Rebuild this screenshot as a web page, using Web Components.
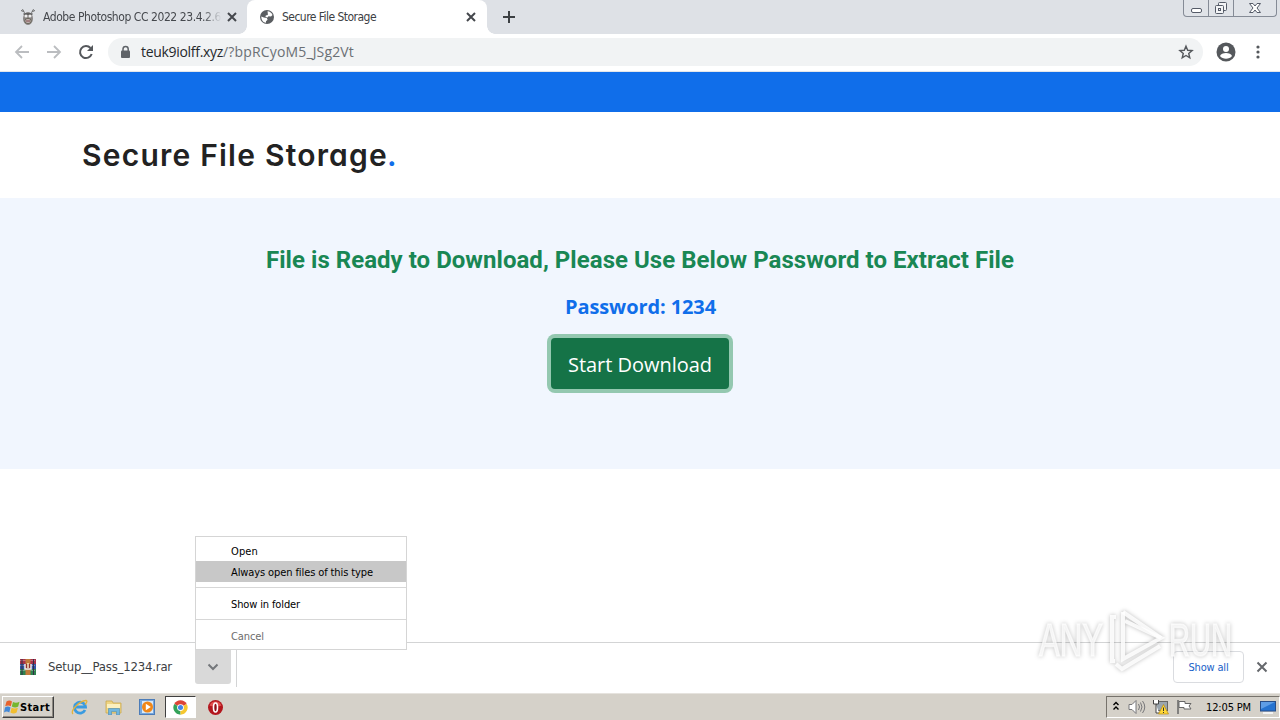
<!DOCTYPE html>
<html lang="en">
<head>
<meta charset="utf-8">
<title>Secure File Storage</title>
<style>
    body {
        margin: 0;
        width: 1280px;
        height: 720px;
        overflow: hidden;
        background: #fff;
        font-family: "DejaVu Sans Condensed", "DejaVu Sans", sans-serif;
    }
</style>
</head>
<body>
<desktop-screen></desktop-screen>

<script>
// one line of text, spaced out to the width given in px
class FitText extends HTMLElement {
    constructor() {
        super();
        this.attachShadow({ mode: 'open' });
        this.shadowRoot.innerHTML = `
            <style>
                :host { display: inline-block; white-space: nowrap; flex: none; }
                span { display: inline-block; }
            </style>
            <span><slot></slot></span>
        `;
    }

    connectedCallback() {
        const span = this.shadowRoot.querySelector('span');
        const width = Number(this.getAttribute('width'));
        const count = this.textContent.length;
        const natural = span.getBoundingClientRect().width;
        span.style.letterSpacing = (width - natural) / count + 'px';
        this.style.width = width + 'px';
    }
}

class BrowserTab extends HTMLElement {
    constructor() {
        super();
        this.attachShadow({ mode: 'open' });
        this.shadowRoot.innerHTML = `
            <style>
                :host {
                    display: flex;
                    align-items: center;
                    box-sizing: border-box;
                    width: 240px;
                    height: 34px;
                    padding: 0 9px 0 12px;
                    font-size: 12px;
                    color: #45484d;
                }
                :host([active]) {
                    background: #fff;
                    border-radius: 8px 8px 0 0;
                    color: #3c4043;
                }
                .icon { display: flex; width: 16px; margin-right: 7px; }
                .title { flex: 1; display: flex; overflow: hidden; }
                :host([faded]) .title {
                    -webkit-mask: linear-gradient(90deg, #000 88%, transparent 98%);
                }
            </style>
            <div class="icon"><slot name="icon"></slot></div>
            <div class="title"><slot></slot></div>
            <svg width="14" height="14" viewBox="0 0 14 14"><path d="M3 3l8 8M11 3l-8 8" stroke="#44474c" stroke-width="2"/></svg>
        `;
    }
}

class TabStrip extends HTMLElement {
    constructor() {
        super();
        this.attachShadow({ mode: 'open' });
        this.shadowRoot.innerHTML = `
            <style>
                :host { display: flex; height: 34px; background: #dee1e6; }
                .first { width: 239px; padding: 0 0 0 20px; }
                .plus { margin: 9px 0 0 7px; }
                .foot { align-self: flex-end; width: 8px; height: 8px; }
                .foot.left { background: radial-gradient(circle at 0 0, #dee1e6 7.5px, #fff 8px); }
                .foot.right { background: radial-gradient(circle at 100% 0, #dee1e6 7.5px, #fff 8px); }
                .window {
                    display: flex;
                    box-sizing: border-box;
                    height: 17px;
                    width: 94px;
                    margin-left: auto;
                    margin-right: 3px;
                    border: 1px solid #858b96;
                    border-top: 0;
                    border-radius: 0 0 4px 4px;
                    background: #e0e3e8;
                }
                .window svg { display: block; }
                .window div { border-right: 1px solid #858b96; width: 25px; box-sizing: border-box; }
                .window div:last-child { border: 0; width: 42px; }
            </style>
            <browser-tab class="first" faded>
                <svg slot="icon" width="16" height="18" viewBox="0 0 16 18">
                    <path d="M2.500 1.200l2 3.600M13.500 1.200l-2 3.600M1 2.500l2.500 1M15 2.500l-2.500 1" stroke="#666" fill="none"/>
                    <ellipse cx="8" cy="10.500" rx="5" ry="6.500" fill="#888484"/>
                    <path d="M3.500 6h9" stroke="#555" stroke-width="1.500"/>
                    <circle cx="6" cy="8" r="1.500" fill="#eee"/><circle cx="10" cy="8" r="1.500" fill="#eee"/>
                    <ellipse cx="8" cy="13" rx="3.200" ry="2.500" fill="#c9b9bb" stroke="#554" stroke-width=".8"/>
                    <path d="M6 13h4" stroke="#744"/>
                </svg>
                <fit-text width="178">Adobe Photoshop CC 2022 23.4.2.6</fit-text>
            </browser-tab>
            <div class="foot left"></div>
            <browser-tab active>
                <svg slot="icon" width="16" height="16" viewBox="0 0 16 16">
                    <circle cx="8" cy="8" r="7" fill="#5a5d61"/>
                    <path d="M8.500 2.300c2.400.2 4.300 1.600 5 3.700l-1.500 1.500-2.500-.3-1 1.300-2-.5.300-1.500 2-.500V4.500zM2.300 7.500l2.500 1 3 .500.800 1.700-1.600 1.600v1.500C4.300 13.600 2.200 11 2.300 7.500z" fill="#fff"/>
                </svg>
                <fit-text width="94">Secure File Storage</fit-text>
            </browser-tab>
            <div class="foot right"></div>
            <svg class="plus" width="14" height="16" viewBox="0 0 14 16"><path d="M7 2v12M1 8h12" stroke="#3c4043" stroke-width="2"/></svg>
            <div class="window">
                <div><svg width="24" height="16"><rect x="7.500" y="8.500" width="10" height="4" rx="1.500" fill="#fff" stroke="#555b68"/></svg></div>
                <div><svg width="24" height="16"><g fill="#f3f4f6" stroke="#555b68"><rect x="9.500" y="2.500" width="8" height="8" rx="1"/><rect x="6.500" y="5.500" width="8" height="8" rx="1"/><rect x="9.500" y="8.500" width="2" height="2"/></g></svg></div>
                <div><svg width="42" height="16"><path d="M15.500 3.500h3.500l2 2.500 2-2.500h3.500l-3.500 4.500 3.500 4.500H23l-2-2.500-2 2.500h-3.500L19 8z" fill="#fff" stroke="#555b68"/></svg></div>
            </div>
        `;
    }
}

class BrowserToolbar extends HTMLElement {
    constructor() {
        super();
        this.attachShadow({ mode: 'open' });
        this.shadowRoot.innerHTML = `
            <style>
                :host {
                    display: flex;
                    align-items: center;
                    box-sizing: border-box;
                    height: 38px;
                    padding: 0 14px 2px;
                    background: #fff;
                    border-bottom: 1px solid #e3e6ea;
                }
                .nav { display: flex; gap: 16px; }
                .omnibox {
                    display: flex;
                    align-items: center;
                    box-sizing: border-box;
                    width: 1095px;
                    height: 28px;
                    margin-left: 14px;
                    padding: 0 9px 0 11px;
                    border-radius: 14px;
                    background: #f1f3f4;
                    font-family: "Open Sans", "Noto Sans", sans-serif;
                    font-size: 14px;
                    color: #25282c;
                }
                .omnibox .path { color: #6b7075; }
                .lock { margin-right: 9px; }
                .star { margin-left: auto; }
                .user { margin-left: 13px; }
                .dots { margin-left: 14px; }
            </style>
            <div class="nav">
                <svg width="16" height="16" viewBox="0 0 16 16"><path d="M15 8H2M8 2L2 8l6 6" fill="none" stroke="#bbbdc0" stroke-width="1.800"/></svg>
                <svg width="16" height="16" viewBox="0 0 16 16"><path d="M1 8h13M8 2l6 6-6 6" fill="none" stroke="#bbbdc0" stroke-width="1.800"/></svg>
                <svg width="16" height="16" viewBox="0 0 16 16"><path d="M13.700 10A6 6 0 1 1 12.500 4" fill="none" stroke="#55585c" stroke-width="2"/><path d="M15 1v6H9z" fill="#55585c"/></svg>
            </div>
            <div class="omnibox">
                <svg class="lock" width="13" height="14" viewBox="0 0 13 14"><path d="M4 6V4a2.600 2.600 0 0 1 5.200 0v2" fill="none" stroke="#5f6368" stroke-width="1.500"/><rect x="2" y="5.500" width="9" height="7.500" rx="1" fill="#5f6368"/></svg>
                <fit-text width="82">teuk9iolff.xyz</fit-text><fit-text class="path" width="131">/?bpRCyoM5_JSg2Vt</fit-text>
                <svg class="star" width="16" height="16" viewBox="0 0 17 17"><path d="M8.500 2.300l1.800 4.300 4.700.4-3.600 3.100 1.100 4.600-4-2.500-4 2.500 1.100-4.600L2 7l4.700-.4z" fill="none" stroke="#55585c" stroke-width="1.500"/></svg>
            </div>
            <svg class="user" width="20" height="20" viewBox="0 0 20 20"><circle cx="10" cy="10" r="9.500" fill="#55585c"/><circle cx="10" cy="7" r="3" fill="#fff"/><path d="M4 14c1-4 11-4 12 0-2.500 3.500-9.500 3.500-12 0z" fill="#fff"/></svg>
            <svg class="dots" width="16" height="16" viewBox="0 0 16 16" fill="#55585c"><circle cx="8" cy="3" r="1.600"/><circle cx="8" cy="8" r="1.600"/><circle cx="8" cy="13" r="1.600"/></svg>
        `;
    }
}

class StoragePage extends HTMLElement {
    constructor() {
        super();
        this.attachShadow({ mode: 'open' });
        this.shadowRoot.innerHTML = `
            <style>
                :host { display: flex; flex-direction: column; height: 570px; background: #fff; }
                .bar { height: 40px; background: #106eea; }
                header {
                    display: flex;
                    box-sizing: border-box;
                    height: 86px;
                    padding: 25px 82px 0;
                    font: 600 30px/36px Inter, sans-serif;
                    font-feature-settings: "cv11";
                    color: #222;
                }
                header .dot { margin-left: -1px; color: #106eea; }
                section {
                    display: flex;
                    flex-direction: column;
                    align-items: center;
                    box-sizing: border-box;
                    height: 271px;
                    padding-top: 46px;
                    background: #f1f6fe;
                }
                h2 { margin: 0; font: 700 24px/32px Roboto, sans-serif; color: #198754; }
                h3 { margin: 17px 0 0 1px; font: 700 20px/28px "Open Sans", sans-serif; color: #106eea; }
                button {
                    display: flex;
                    align-items: center;
                    justify-content: center;
                    width: 178px;
                    height: 51px;
                    margin-top: 17px;
                    padding: 0;
                    border: 0;
                    border-radius: 4px;
                    background: #157347;
                    box-shadow: 0 0 0 4px #94c8b0;
                    color: #fff;
                    font: 400 20px/28px "Open Sans", sans-serif;
                }
                button fit-text { margin-top: 3px; }
            </style>
            <div class="bar"></div>
            <header><fit-text width="306">Secure File Storage</fit-text><span class="dot">.</span></header>
            <section>
                <h2><fit-text width="748">File is Ready to Download, Please Use Below Password to Extract File</fit-text></h2>
                <h3><fit-text width="151">Password: 1234</fit-text></h3>
                <button><fit-text width="144">Start Download</fit-text></button>
            </section>
        `;
    }
}

class DownloadShelf extends HTMLElement {
    constructor() {
        super();
        this.attachShadow({ mode: 'open' });
        this.shadowRoot.innerHTML = `
            <style>
                :host {
                    display: flex;
                    align-items: center;
                    box-sizing: border-box;
                    height: 51px;
                    padding: 0 11px 2px 19px;
                    border-top: 1px solid #d3d4d5;
                    background: #fff;
                    color: #3c4043;
                }
                .name { margin: 0 0 2px 12px; font-size: 13px; }
                .arrow {
                    display: flex;
                    align-items: center;
                    justify-content: center;
                    width: 36px;
                    height: 34px;
                    margin: 0 5px 0 23px;
                    border-radius: 0 0 3px 3px;
                    background: #d9d9d9;
                }
                .rule { width: 1px; height: 38px; align-self: flex-start; margin-top: 6px; background: #d3d4d5; }
                .all {
                    display: flex;
                    align-items: center;
                    justify-content: center;
                    box-sizing: border-box;
                    width: 71px;
                    height: 32px;
                    margin-left: auto;
                    border: 1px solid #dadce0;
                    border-radius: 4px;
                    font-size: 11px;
                    color: #1a62c8;
                }
                .close { margin-left: 11px; }
            </style>
            <svg width="17" height="16" viewBox="0 0 17 16">
                <rect x="1" width="16" height="5" fill="#a8324b"/><rect x="1" y="5" width="16" height="5" fill="#3454a5"/><rect x="1" y="10" width="16" height="6" fill="#2f8250"/>
                <path d="M1 1.500h15M1 6.500h15M1 11.500h15" stroke="#fff" stroke-opacity=".3"/>
                <path d="M3 0v16M14.500 0v16" stroke="#332f45"/>
                <rect x="6.500" width="5" height="16" fill="#c27b3b"/>
                <path d="M6 5v5h6V5" fill="#922f2f" stroke="#eee" stroke-width="1.500"/><path d="M9 4v5" stroke="#f6e8c4" stroke-width="1.500"/>
            </svg>
            <fit-text class="name" width="124">Setup__Pass_1234.rar</fit-text>
            <div class="arrow"><svg width="12" height="8" viewBox="0 0 12 8"><path d="M1.500 1.500L6 6l4.500-4.500" fill="none" stroke="#74777b" stroke-width="2"/></svg></div>
            <div class="rule"></div>
            <div class="all"><fit-text width="40">Show all</fit-text></div>
            <svg class="close" width="14" height="14" viewBox="0 0 14 14"><path d="M2.500 2.500l9 9M11.500 2.500l-9 9" stroke="#65686c" stroke-width="2"/></svg>
        `;
    }
}

class ContextMenu extends HTMLElement {
    constructor() {
        super();
        this.attachShadow({ mode: 'open' });
        this.shadowRoot.innerHTML = `
            <style>
                :host {
                    display: block;
                    position: absolute;
                    left: 195px;
                    top: 536px;
                    box-sizing: border-box;
                    width: 212px;
                    height: 114px;
                    padding-top: 3px;
                    border: 1px solid #d5d5d5;
                    background: #fff;
                    font-size: 11px;
                    line-height: 21px;
                    color: #000;
                }
                .item { box-sizing: border-box; height: 21px; padding: 1px 0 0 35px; }
                .hot { background: #c8c8c8; }
                .off { color: #6d6d6d; }
                hr { height: 1px; margin: 5px 0; border: 0; background: #d7d7d7; }
            </style>
            <div class="item"><fit-text width="27">Open</fit-text></div>
            <div class="item hot"><fit-text width="142">Always open files of this type</fit-text></div>
            <hr>
            <div class="item"><fit-text width="69">Show in folder</fit-text></div>
            <hr>
            <div class="item off"><fit-text width="33">Cancel</fit-text></div>
        `;
    }
}

class TaskBar extends HTMLElement {
    constructor() {
        super();
        this.attachShadow({ mode: 'open' });
        this.shadowRoot.innerHTML = `
            <style>
                :host {
                    display: flex;
                    align-items: center;
                    box-sizing: border-box;
                    height: 27px;
                    padding-left: 2px;
                    border-top: 1px solid #e6e3de;
                    background: #d5d1c9;
                    color: #000;
                }
                .start {
                    display: flex;
                    align-items: center;
                    box-sizing: border-box;
                    width: 52px;
                    height: 22px;
                    padding-left: 1px;
                    border: 1px solid;
                    border-color: #fff #404040 #404040 #fff;
                    box-shadow: inset -1px -1px #8d8981;
                    font-size: 11px;
                    font-weight: bold;
                }
                .quick { display: flex; align-items: center; margin-left: 8px; }
                .cell { display: flex; align-items: center; justify-content: center; width: 34px; height: 22px; }
                .pressed {
                    box-sizing: border-box;
                    width: 31px;
                    margin: 0 2px 0 1px;
                    border: 1px solid;
                    border-color: #404040 #fff #fff #404040;
                    background: #fff;
                }
                .tray {
                    display: flex;
                    align-items: center;
                    box-sizing: border-box;
                    width: 174px;
                    height: 22px;
                    margin-left: auto;
                    padding-left: 5px;
                    border: 1px solid;
                    border-color: #77736c #fff #fff #77736c;
                    font-size: 11px;
                }
                .sound { margin-left: 8px; }
                .net { margin-left: 6px; }
                .flag { margin-left: 7px; }
                .clock { margin-left: 13px; }
                .show { margin-left: 9px; }
            </style>
            <div class="start">
                <svg width="16" height="16" viewBox="0 0 16 16">
                    <path d="M2.500 2.500C5 .8 6.500 1.500 8 2.500L6.800 7.300C5 6.200 3.500 6.200 1.200 7.300z" fill="#e8632c"/>
                    <path d="M9 3c2 1 4 1 6.500-.2L14.200 7.600c-2 1.200-4 1.200-6.400 0z" fill="#75b62e"/>
                    <path d="M1 8.400c2-1.200 3.800-1 5.500 0l-1.200 5c-2-1.400-3.500-1.200-5.300 0z" fill="#4389d7"/>
                    <path d="M7.600 8.800c2 1 4 1 6.300 0l-1.300 4.800c-2 1.200-4 1.200-6.200 0z" fill="#f1be30"/>
                </svg>
                <fit-text width="30">Start</fit-text>
            </div>
            <div class="quick">
                <div class="cell"><svg width="17" height="17" viewBox="0 0 17 17"><path d="M14 11a5.500 5.500 0 1 1 .5-3H5" fill="none" stroke="#3a9be0" stroke-width="2.800"/><path d="M2 15C-1 12 8 2 15 1.500c2 .5 0 3-1 4" fill="none" stroke="#e3b23b" stroke-width="1.300"/></svg></div>
                <div class="cell"><svg width="17" height="16" viewBox="0 0 17 16"><path d="M1 2h6l1 2h8v10H1z" fill="#eed483" stroke="#c9a84e" stroke-width=".8"/><path d="M2 5h13v4H2z" fill="#fbf0bf"/><path d="M3.500 16v-6.500h11V16h-3v-3.500h-5V16z" fill="#70b6df" stroke="#498bb4" stroke-width=".6"/></svg></div>
                <div class="cell"><svg width="17" height="16" viewBox="0 0 17 16"><rect x=".500" y=".500" width="15" height="15" fill="#75a7de" stroke="#4c7cb8"/><rect x="3" y="2" width="11" height="12" fill="#d8e8f8"/><circle cx="8.500" cy="8" r="5.500" fill="#f08718"/><path d="M6.800 4.800l5 3.200-5 3.200z" fill="#fff"/></svg></div>
                <div class="cell pressed"><svg width="15" height="15" viewBox="0 0 16 16"><path d="M8 8L1.400 4.200A7.600 7.600 0 0 1 14.600 4.200z" fill="#dc4437"/><path d="M8 8L8 15.600A7.600 7.600 0 0 1 1.400 4.200z" fill="#33a259"/><path d="M8 8L14.600 4.200A7.600 7.600 0 0 1 8 15.600z" fill="#f6c72f"/><circle cx="8" cy="8" r="3.600" fill="#fff"/><circle cx="8" cy="8" r="2.700" fill="#4284e8"/></svg></div>
                <div class="cell"><svg width="17" height="17" viewBox="0 0 17 17"><circle cx="8.500" cy="8.500" r="7.500" fill="#b3161d"/><path d="M2.500 6.500a6.500 6.500 0 0 1 12 0c-3 1.500-9 1.500-12 0z" fill="#e2514f"/><ellipse cx="8.500" cy="8.500" rx="2" ry="4.500" fill="#8c0f16" stroke="#fff" stroke-width="1.600"/></svg></div>
            </div>
            <div class="tray">
                <svg width="8" height="12" viewBox="0 0 8 12"><path d="M1.500 4L4 1.500 6.500 4M1.500 8.500L4 6l2.500 2.500" fill="none" stroke="#000" stroke-width="1.400"/></svg>
                <svg class="sound" width="18" height="16" viewBox="0 0 18 16"><path d="M1 5.500h3l4-4v13l-4-4H1z" fill="#fff" stroke="#77777a"/><path d="M10.500 5q2 3 0 6M12.500 3.500q3 4.500 0 9M14.500 2q4.500 6 0 12" fill="none" stroke="#77777a"/></svg>
                <svg class="net" width="17" height="16" viewBox="0 0 17 16"><rect x="4.500" y="2.500" width="11" height="9" fill="#9aa5ae" stroke="#666"/><path d="M8 14h5" stroke="#666" stroke-width="2"/><path d="M1.500 1v4h5V1M4 5v9h3" fill="#fff" stroke="#444"/><path d="M11.500 5.500l5 9.500h-10z" fill="#ffd838" stroke="#b98a10" stroke-width=".7"/><path d="M11.500 8.500v3.500M11.500 13v1" stroke="#333"/></svg>
                <svg class="flag" width="17" height="16" viewBox="0 0 17 16"><path d="M2 1v14" stroke="#666" stroke-width="1.500"/><path d="M3 2.500h6v2h6L13 7l2 3H8V8.500H3z" fill="#fff" stroke="#666"/></svg>
                <fit-text class="clock" width="45">12:05 PM</fit-text>
                <svg class="show" width="17" height="15" viewBox="0 0 17 15"><rect x=".5" y="1.500" width="15" height="9.500" fill="#2673d0" stroke="#284d87"/><path d="M1 2h14L1 9z" fill="#5e9de6"/><path d="M3 13h10" stroke="#f2f2f2" stroke-width="2"/></svg>
            </div>
        `;
    }
}

// translucent ANY.RUN mark above the page and shelf
class RunMark extends HTMLElement {
    constructor() {
        super();
        this.attachShadow({ mode: 'open' });
        this.shadowRoot.innerHTML = `
            <style>
                :host { display: block; position: absolute; left: 1030px; top: 600px; pointer-events: none; }
                svg { display: block; overflow: visible; filter: drop-shadow(0 0 2px rgba(0, 0, 0, .3)); }
                text { font: 46px "Liberation Sans Narrow", "Liberation Sans", sans-serif; fill: #fff; fill-opacity: .75; stroke: #fff; stroke-opacity: .6; stroke-width: 1.5px; }
            </style>
            <svg width="220" height="80" viewBox="0 0 220 80">
                <text x="9" y="56" textLength="64" lengthAdjust="spacingAndGlyphs">ANY</text>
                <text x="139" y="56" textLength="63" lengthAdjust="spacingAndGlyphs">RUN</text>
                <g fill="none" stroke="#fff" stroke-opacity=".85" stroke-width="4">
                    <path d="M93 12l38 26"/>
                    <path d="M86 17h-4v44h3"/>
                    <path d="M93 12v47l38-21-36-17M86 64l6 5 38-23"/>
                </g>
            </svg>
        `;
    }
}

class DesktopScreen extends HTMLElement {
    constructor() {
        super();
        this.attachShadow({ mode: 'open' });
        this.shadowRoot.innerHTML = `
            <style>
                :host { display: flex; flex-direction: column; position: relative; width: 1280px; height: 720px; }
            </style>
            <tab-strip></tab-strip>
            <browser-toolbar></browser-toolbar>
            <storage-page></storage-page>
            <download-shelf></download-shelf>
            <task-bar></task-bar>
            <context-menu></context-menu>
            <run-mark></run-mark>
        `;
    }
}

customElements.define('browser-tab', BrowserTab);
customElements.define('tab-strip', TabStrip);
customElements.define('browser-toolbar', BrowserToolbar);
customElements.define('storage-page', StoragePage);
customElements.define('download-shelf', DownloadShelf);
customElements.define('context-menu', ContextMenu);
customElements.define('task-bar', TaskBar);
customElements.define('run-mark', RunMark);
customElements.define('desktop-screen', DesktopScreen);
customElements.define('fit-text', FitText);
</script>
</body>
</html>
